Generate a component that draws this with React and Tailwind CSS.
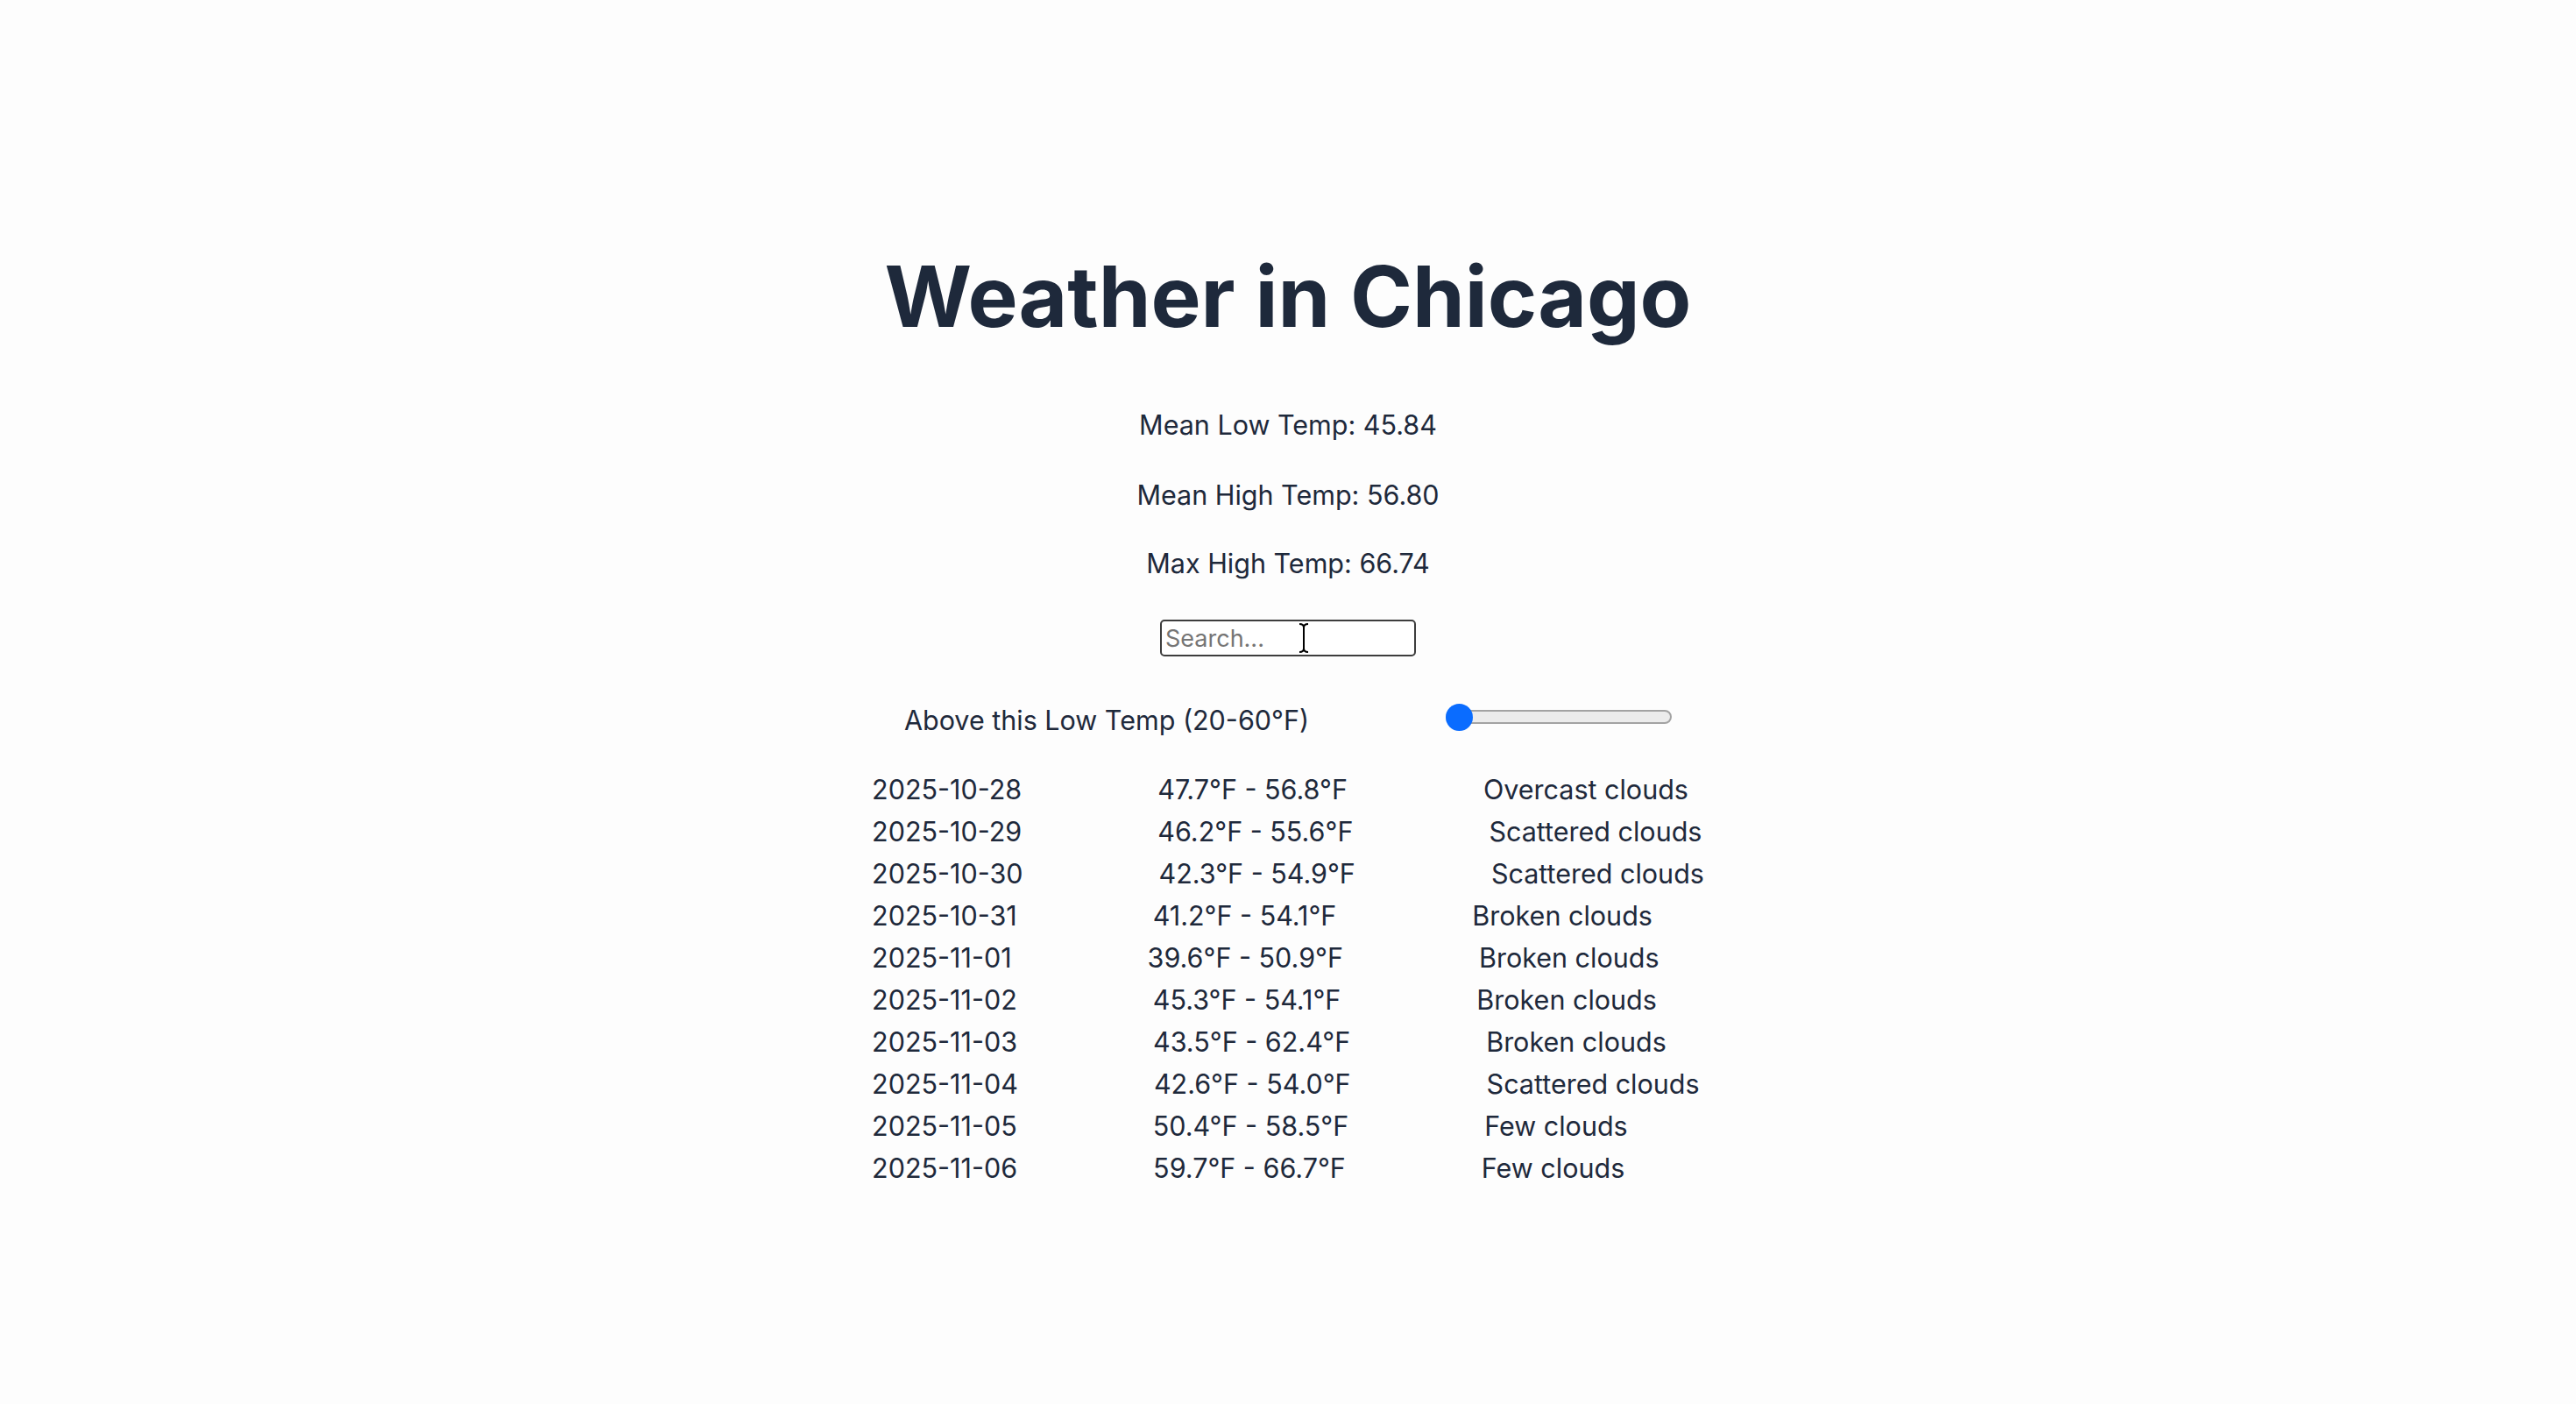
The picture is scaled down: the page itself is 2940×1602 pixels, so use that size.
import { useState } from "react";

const days = [
  { date: "2025-10-28", temp: "47.7°F - 56.8°F", desc: "Overcast clouds" },
  { date: "2025-10-29", temp: "46.2°F - 55.6°F", desc: "Scattered clouds" },
  { date: "2025-10-30", temp: "42.3°F - 54.9°F", desc: "Scattered clouds" },
  { date: "2025-10-31", temp: "41.2°F - 54.1°F", desc: "Broken clouds" },
  { date: "2025-11-01", temp: "39.6°F - 50.9°F", desc: "Broken clouds" },
  { date: "2025-11-02", temp: "45.3°F - 54.1°F", desc: "Broken clouds" },
  { date: "2025-11-03", temp: "43.5°F - 62.4°F", desc: "Broken clouds" },
  { date: "2025-11-04", temp: "42.6°F - 54.0°F", desc: "Scattered clouds" },
  { date: "2025-11-05", temp: "50.4°F - 58.5°F", desc: "Few clouds" },
  { date: "2025-11-06", temp: "59.7°F - 66.7°F", desc: "Few clouds" },
];

export default function App() {
  const [query, setQuery] = useState("");

  return (
    <div className="min-h-screen bg-[#fdfdfd] pt-[290px] text-center text-[#1e293b] font-['Inter','Noto_Sans',sans-serif]">
      <h1 className="text-[96px] font-bold leading-none">Weather in Chicago</h1>

      {/* stats */}
      <p className="mt-[75px] text-[30.5px] leading-[48px]">Mean Low Temp: 45.84</p>
      <p className="mt-[32px] text-[30.5px] leading-[48px]">Mean High Temp: 56.80</p>
      <p className="mt-[30px] text-[30.5px] leading-[48px]">Max High Temp: 66.74</p>

      {/* search */}
      <div className="relative mx-auto mt-[40px] w-[292px]">
        <input
          value={query}
          onChange={(e) => setQuery(e.target.value)}
          placeholder="Search..."
          className="block h-[42px] w-full rounded-[5px] border-2 border-[#3d3d3d] bg-white px-[4px] text-[27px] text-[#1e293b] placeholder:text-[#757575] outline-none"
        />
        {/* mouse cursor */}
        <svg className="absolute left-[158px] top-[4px]" width="12" height="34" viewBox="0 0 12 34">
          <path d="M1 1 Q6 1 6 5 V29 Q6 33 1 33 M11 1 Q6 1 6 5 M6 29 Q6 33 11 33" fill="none" stroke="#fff" strokeWidth="4" />
          <path d="M1 1 Q6 1 6 5 V29 Q6 33 1 33 M11 1 Q6 1 6 5 M6 29 Q6 33 11 33" fill="none" stroke="#000" strokeWidth="2" />
        </svg>
      </div>

      {/* slider */}
      <div className="mt-[49px] flex items-center justify-center gap-[156px]">
        <label className="text-[30.5px] leading-[48px]">Above this Low Temp (20-60°F)</label>
        <div className="relative mb-[8px] flex h-[32px] w-[258px] items-center">
          <div className="h-[16px] w-full rounded-full border-2 border-[#a3a3a3] bg-[#ececec]" />
          <div className="absolute left-0 top-[1px] h-[31px] w-[31px] rounded-full bg-[#0a6cff]" />
        </div>
      </div>

      {/* forecast */}
      <div className="mx-auto mt-[31px] w-fit text-left">
        {days.map((d) => (
          <div key={d.date} className="flex gap-[155px] text-[30.5px] leading-[48px]">
            <span>{d.date}</span>
            <span>{d.temp}</span>
            <span>{d.desc}</span>
          </div>
        ))}
      </div>
    </div>
  );
}
